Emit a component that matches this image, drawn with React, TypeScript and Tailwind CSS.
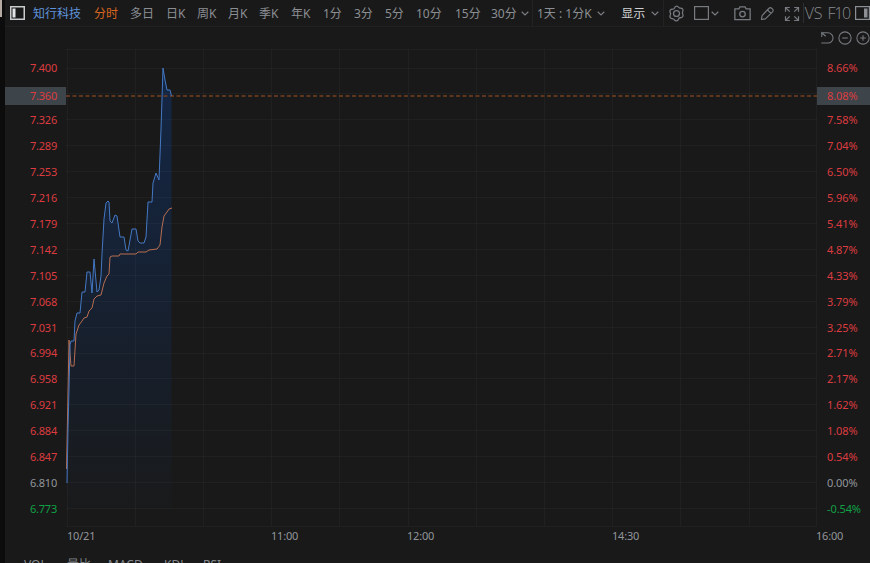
import type { ReactNode } from "react";

const PERIODS = [
  { label: "知行科技", width: "w-[61px]", tone: "text-[#5f93dc]" },
  { label: "分时", width: "w-[36px]", tone: "text-[#d9661f]" },
  { label: "多日", width: "w-[36px]", tone: "text-[#8b8f94]" },
  { label: "日K", width: "w-[31px]", tone: "text-[#8b8f94]" },
  { label: "周K", width: "w-[31px]", tone: "text-[#8b8f94]" },
  { label: "月K", width: "w-[31px]", tone: "text-[#8b8f94]" },
  { label: "季K", width: "w-[32px]", tone: "text-[#8b8f94]" },
  { label: "年K", width: "w-[32px]", tone: "text-[#8b8f94]" },
  { label: "1分", width: "w-[31px]", tone: "text-[#8b8f94]" },
  { label: "3分", width: "w-[31px]", tone: "text-[#8b8f94]" },
  { label: "5分", width: "w-[31px]", tone: "text-[#8b8f94]" },
  { label: "10分", width: "w-[39px]", tone: "text-[#8b8f94]" },
  { label: "15分", width: "w-[36px]", tone: "text-[#8b8f94]" },
  { label: "30分", width: "w-[30px]", tone: "text-[#8b8f94]" },
];

// The second row is covered by the last-price tag.
const ROWS = [
  { price: "7.400", pct: "8.66%" },
  { price: "7.360", pct: "8.08%", current: true },
  { price: "7.326", pct: "7.58%" },
  { price: "7.289", pct: "7.04%" },
  { price: "7.253", pct: "6.50%" },
  { price: "7.216", pct: "5.96%" },
  { price: "7.179", pct: "5.41%" },
  { price: "7.142", pct: "4.87%" },
  { price: "7.105", pct: "4.33%" },
  { price: "7.068", pct: "3.79%" },
  { price: "7.031", pct: "3.25%" },
  { price: "6.994", pct: "2.71%" },
  { price: "6.958", pct: "2.17%" },
  { price: "6.921", pct: "1.62%" },
  { price: "6.884", pct: "1.08%" },
  { price: "6.847", pct: "0.54%" },
  { price: "6.810", pct: "0.00%", tone: "text-[#92969b]" },
  { price: "6.773", pct: "-0.54%", tone: "text-[#10a046]" },
];

const PRICE_LINE =
  "1,434 2,380 3,340 4,296 5,292 8,292 9,272 11,264 14,264 16,243 19,243 21,223 24,223 26,244 28,210 31,243 33,241 35,227 36,205 38,170 40,154 42,152 43,153 44,172 46,174 49,166 51,167 54,188 58,188 60,201 62,202 66,180 70,180 72,192 74,194 78,194 80,188 82,153 86,153 87,134 90,124 93,131 95,80 97,19 99,31 101,41 104,41 105.500,47";

const AVERAGE_LINE =
  "0.5,420 1.5,370 3,291 5,317 8,317 10,285 13,276 16,272 18,269 21,268 23,262 26,259 28,250 31,247 35,246 38,234 41,227 43,225 44,208 46,207 53,207 54,205 70,205 72,203 80,203 83,201 91,200 94,196 96,178 98,167 101,163 103,160 106,159";

function Chevron() {
  return (
    <svg className="block h-[5px] w-[8px] shrink-0" viewBox="0 0 8 5" fill="none" stroke="#777b80" strokeWidth="1.2">
      <path d="M.7.8 4 4 7.3.8" />
    </svg>
  );
}

function Icon({ size, children }: { size: string; children: ReactNode }) {
  return (
    <svg className={`block shrink-0 ${size}`} viewBox="0 0 16 16" fill="none" stroke="#777b80" strokeWidth="1.2">
      {children}
    </svg>
  );
}

function Toolbar() {
  return (
    <div className="flex h-[27px] shrink-0 items-center border-b border-[#1f2021] pl-[5px] text-[12px] whitespace-nowrap">
      <svg className="mr-[8px] block h-[14px] w-[15px] shrink-0" viewBox="0 0 15 14">
        <rect x=".75" y=".75" width="13.5" height="12.5" fill="none" stroke="#c9cbcc" strokeWidth="1.5" />
        <rect x="2.5" y="2.5" width="3" height="9" fill="#e2e4e5" />
      </svg>
      {PERIODS.map((item) => (
        <span key={item.label} className={`shrink-0 pt-[2px] ${item.width} ${item.tone}`}>
          {item.label}
        </span>
      ))}
      <Chevron />
      <span className="ml-[3px] h-[26px] w-px bg-[#222324]" />
      <span className="ml-[4px] w-[61px] pt-[2px] text-[#8b8f94]">1天 : 1分K</span>
      <Chevron />
      <span className="ml-[16px] w-[30px] pt-[2px] text-[#cfd1d3]">显示</span>
      <Chevron />
      <span className="mr-[4px] ml-[4px] h-[26px] w-px bg-[#222324]" />
      <Icon size="size-[17px]">
        <path
          d="M8 1q1.3 0 2.1 1.3.5.6 1.2.6 1.8-.1 2.5 1t-.1 2.7q-.4.7 0 1.4.9 1.6.2 2.8t-2.6 1.2q-.7 0-1.1.7Q9.4 15 8 15t-2.200-1.300q-.4-.7-1.100-.7-1.900-.1-2.600-1.200t.2-2.800q.4-.7 0-1.400-.9-1.600-.2-2.700t2.600-1q.8 0 1.200-.6Q6.700 1 8 1z"
          strokeLinejoin="round"
        />
        <circle cx="8" cy="8" r="2.8" />
      </Icon>
      <svg className="ml-[9px] block h-[14px] w-[15px] shrink-0" viewBox="0 0 15 14">
        <rect x=".6" y=".6" width="13.8" height="12.8" fill="none" stroke="#777b80" strokeWidth="1.2" />
      </svg>
      <span className="ml-[2px]">
        <Chevron />
      </span>
      <span className="ml-[15px]">
        <Icon size="size-[17px]">
          <path d="M.8 3.600h3.800l1-1.800h4.800l1 1.800h3.800v10.200H.8z" />
          <circle cx="8" cy="8.5" r="2.6" />
        </Icon>
      </span>
      <span className="ml-[9px]">
        <Icon size="size-[15px]">
          <path d="m1.500 14.400.7-4.200 7.400-7.800q1.400-1.300 2.800 0l1 1q1.300 1.400 0 2.800l-7.700 7.500zM8 4.200l3.800 3.800" strokeLinejoin="round" />
        </Icon>
      </span>
      <span className="ml-[9px] pt-px">
        <Icon size="size-[16px]">
          <path d="M1.500 5.800V1.500h4.300M1.500 1.500l4.200 4.200M10.200 1.500h4.300v4.300M14.500 1.500l-4.200 4.200M1.500 10.200v4.300h4.300M1.500 14.500l4.200-4.200M10.200 14.500h4.300v-4.300M14.500 14.500l-4.200-4.200" />
        </Icon>
      </span>
      <span className="ml-[3px] h-[20px] w-px bg-[#2c2e30]" />
      <span className="ml-px w-[23px] font-['Open_Sans',sans-serif] text-[16px] font-light tracking-[-0.2px] text-[#85898e]">VS</span>
      <span className="w-[28px] font-['Open_Sans',sans-serif] text-[16px] font-light tracking-[-1.3px] text-[#85898e]">F10</span>
      <svg className="block h-[14px] w-[15px] shrink-0" viewBox="0 0 15 14">
        <rect x=".6" y=".6" width="13.8" height="12.8" fill="none" stroke="#8b8f94" strokeWidth="1.2" />
        <rect x="9" y="2.5" width="3.5" height="9" fill="#8b8f94" />
      </svg>
    </div>
  );
}

function ChartControls() {
  return (
    <div className="flex h-[22px] shrink-0 items-center justify-end gap-[4px] overflow-hidden">
      <Icon size="size-[14px]">
        <path d="M2 2h7a5.900 5.900 0 0 1 0 11.800H1.500M2 6.800V2l4.500 4" />
      </Icon>
      <Icon size="size-[14px]">
        <circle cx="8" cy="8" r="7" />
        <path d="M4.800 8h6.400" />
      </Icon>
      <Icon size="size-[14px]">
        <circle cx="8" cy="8" r="7" />
        <path d="M4.800 8h6.400M8 4.800v6.400" />
      </Icon>
    </div>
  );
}

function Axis({ side }: { side: "left" | "right" }) {
  const left = side === "left";
  return (
    <div className={`flex shrink-0 flex-col pt-[6px] text-[11px] ${left ? "w-[61px] text-right tracking-[-0.2px]" : "w-[53px] tracking-[-0.1px]"}`}>
      {ROWS.map((row) => (
        <div
          key={row.price}
          className={`flex h-[25.91px] shrink-0 items-center ${left ? "justify-end" : ""} ${row.tone ?? "text-[#dc3c40]"}`}
        >
          {row.current ? (
            <span
              className={`relative top-[2px] flex h-[18px] w-full items-center bg-[#3d454b] ${left ? "justify-end pr-[9px]" : "pl-[10px]"}`}
            >
              {left ? row.price : row.pct}
            </span>
          ) : (
            <span className={left ? "pr-[9px]" : "pl-[10px]"}>{left ? row.price : row.pct}</span>
          )}
        </div>
      ))}
    </div>
  );
}

function Plot() {
  return (
    <svg className="block h-[478px] w-[751px] shrink-0" viewBox="0 0 751 478" fill="none">
      <defs>
        <linearGradient id="area" x1="0" y1="19" x2="0" y2="460" gradientUnits="userSpaceOnUse">
          <stop offset="0" stopColor="#142746" />
          <stop offset=".5" stopColor="#162132" />
          <stop offset="1" stopColor="#191a1b" />
        </linearGradient>
      </defs>
      <polygon points={`1,460 ${PRICE_LINE} 105.5,460`} fill="url(#area)" />
      <g stroke="#ffffff" strokeOpacity=".032">
        {Array.from({ length: 12 }, (_, i) => {
          const x = Math.min(Math.round(i * 68.2 + 0.6) + 0.5, 750.5);
          return <path key={i} d={`M${x} 0V477`} />;
        })}
        {ROWS.map((row, i) => (
          <path key={row.price} d={`M0 ${Math.round(18.5 + i * 25.91) + 0.5}H751`} />
        ))}
        <path d="M0 .5H751M0 477.5H751" />
      </g>
      <path d="M0 47H751" stroke="#75401f" strokeWidth="1.4" strokeDasharray="4 2.5" />
      <polyline points={AVERAGE_LINE} stroke="#b76d50" strokeLinejoin="round" />
      <polyline points={PRICE_LINE} stroke="#4478c4" strokeLinejoin="round" />
    </svg>
  );
}

export default function App() {
  return (
    <div className="flex h-[563px] w-[870px] overflow-hidden bg-[#191919] font-['Noto_Sans','Noto_Sans_CJK_SC',sans-serif] leading-none">
      <div className="w-[5px] shrink-0 bg-[#0c0c0c]">
        <div className="h-[17px] w-[2px] bg-[#b5aaa2]" />
      </div>
      <div className="flex w-[865px] shrink-0 flex-col">
        <Toolbar />
        <ChartControls />
        <div className="flex h-[478px] shrink-0">
          <Axis side="left" />
          <Plot />
          <Axis side="right" />
        </div>
        <div className="flex h-[17px] shrink-0 items-center pl-[62px] text-[11px] tracking-[-0.2px] text-[#92969b]">
          <span className="w-[204px]">10/21</span>
          <span className="w-[136px]">11:00</span>
          <span className="w-[205px]">12:00</span>
          <span className="w-[204px]">14:30</span>
          <span>16:00</span>
        </div>
        <div className="flex h-[19px] shrink-0 overflow-hidden pt-[15px] pl-[19px] text-[12px] text-[#85898e]">
          <span className="w-[43px]">VOL</span>
          <span className="w-[41px]">量比</span>
          <span className="w-[56px]">MACD</span>
          <span className="w-[39px]">KDJ</span>
          <span>RSI</span>
        </div>
      </div>
    </div>
  );
}
